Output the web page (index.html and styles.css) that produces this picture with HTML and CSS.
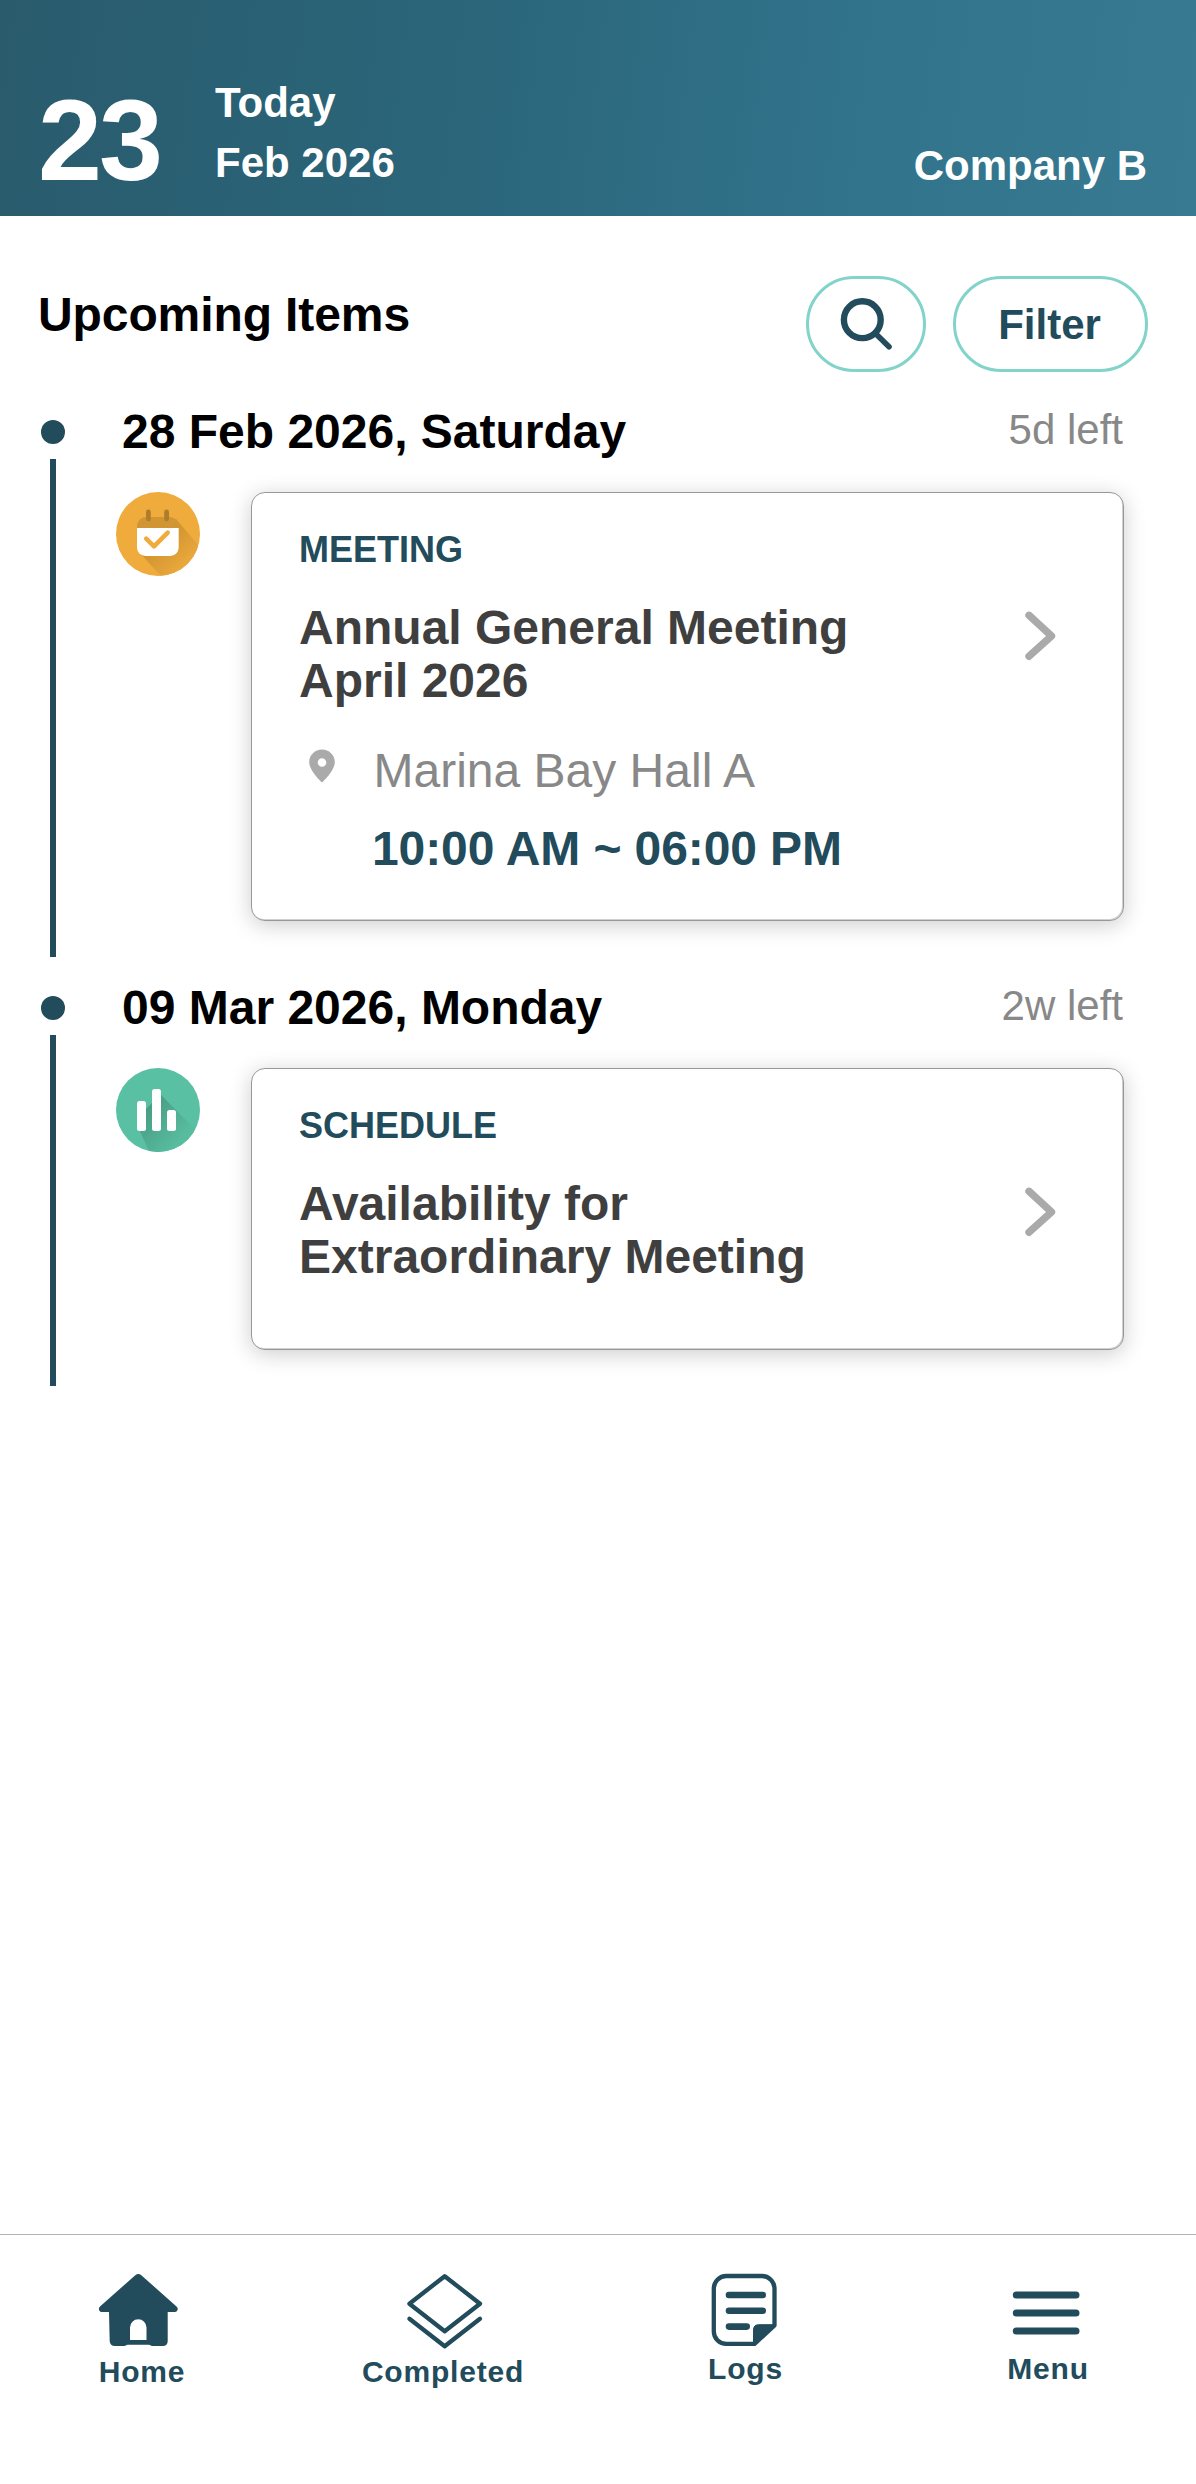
FILE: index.html
```html
<!DOCTYPE html>
<html lang="en">
<head>
<meta charset="utf-8">
<title>Upcoming Items</title>
<link rel="stylesheet" href="styles.css">
</head>
<body>
<div class="app">
  <header class="header">
    <div class="header-day">23</div>
    <div class="header-date"><div>Today</div><div>Feb 2026</div></div>
    <div class="header-company">Company B</div>
  </header>

  <main class="main">
    <div class="toolbar">
      <h1 class="toolbar-title">Upcoming Items</h1>
      <button class="pill pill-search" aria-label="Search">
        <svg width="60" height="60" viewBox="0 0 60 60" fill="none" stroke="currentColor" stroke-linecap="round">
          <circle cx="26.3" cy="25.7" r="18.4" stroke-width="6.4"/>
          <path d="M40 40L53 52.7" stroke-width="5.6"/>
        </svg>
      </button>
      <button class="pill pill-filter">Filter</button>
    </div>

    <section class="item">
      <span class="dot"></span>
      <div class="item-head">
        <h2 class="item-date">28 Feb 2026, Saturday</h2>
        <span class="item-left">5d left</span>
      </div>
      <span class="line"></span>
      <div class="item-body">
        <svg class="badge" viewBox="0 0 84 84">
          <defs>
            <linearGradient id="meeting-shade" x1="30" y1="35" x2="68" y2="76" gradientUnits="userSpaceOnUse">
              <stop offset="0.3" stop-color="#cf9230"/><stop offset="1" stop-color="#eba93c"/>
            </linearGradient>
            <clipPath id="disc"><circle cx="42" cy="42" r="42"/></clipPath>
          </defs>
          <circle cx="42" cy="42" r="42" fill="#f0ab3d"/>
          <path d="M60 27L90 62V90H50L24 61Z" fill="url(#meeting-shade)" clip-path="url(#disc)"/>
          <path d="M21 36V34a9 9 0 0 1 9-9H53.700a9 9 0 0 1 9 9V36Z" fill="#d19633"/>
          <path d="M21 36H62.700V55.500a8.500 8.500 0 0 1-8.500 8.500H29.500A8.500 8.500 0 0 1 21 55.500Z" fill="#fff"/>
          <path d="M32.400 20V27M50.600 20V27" stroke="#ae7d2b" stroke-width="4.800" stroke-linecap="round"/>
          <path d="M30.200 46.700L38 54.300L51.700 40.700" fill="none" stroke="#f0ab3d" stroke-width="4.600" stroke-linecap="round" stroke-linejoin="round"/>
        </svg>
        <article class="card card-meeting">
          <div class="card-text">
            <div class="card-kind">MEETING</div>
            <h3 class="card-title">Annual General Meeting April 2026</h3>
            <div class="card-place">
              <svg class="pin" width="26" height="34" viewBox="0 0 26 34"><path d="M13 0.500C6 0.500 0.200 6 0.200 13C0.200 22 13 33.500 13 33.500S25.800 22 25.800 13C25.800 6 20 0.500 13 0.500ZM13 9.200a4.300 4.300 0 1 1 0 8.600a4.300 4.300 0 0 1 0-8.600Z" fill="#aaa"/></svg>
              <span>Marina Bay Hall A</span>
            </div>
            <div class="card-time">10:00 AM ~ 06:00 PM</div>
          </div>
          <svg class="chevron" width="40" height="56" viewBox="0 0 40 56"><path d="M8 7.300L30.500 28L8 48.300"/></svg>
        </article>
      </div>
    </section>

    <section class="item">
      <span class="dot"></span>
      <div class="item-head">
        <h2 class="item-date">09 Mar 2026, Monday</h2>
        <span class="item-left">2w left</span>
      </div>
      <span class="line"></span>
      <div class="item-body">
        <svg class="badge" viewBox="0 0 84 84">
          <defs>
            <linearGradient id="schedule-shade" x1="30" y1="40" x2="66" y2="72" gradientUnits="userSpaceOnUse">
              <stop offset="0" stop-color="#499c84"/><stop offset="1" stop-color="#58bd9f"/>
            </linearGradient>
          </defs>
          <circle cx="42" cy="42" r="42" fill="#59c0a3"/>
          <path d="M45 27L90 72V90H36L23.500 62L30 41L36 35Z" fill="url(#schedule-shade)" clip-path="url(#disc)"/>
          <g fill="#fff">
            <rect x="21" y="33" width="9" height="30" rx="2.500"/>
            <rect x="36" y="21" width="9" height="42" rx="2.500"/>
            <rect x="51" y="42" width="9" height="21" rx="2.500"/>
          </g>
        </svg>
        <article class="card card-schedule">
          <div class="card-text">
            <div class="card-kind">SCHEDULE</div>
            <h3 class="card-title">Availability for Extraordinary Meeting</h3>
          </div>
          <svg class="chevron" width="40" height="56" viewBox="0 0 40 56"><path d="M8 7.300L30.500 28L8 48.300"/></svg>
        </article>
      </div>
    </section>
  </main>

  <nav class="nav">
    <a class="nav-item nav-home">
      <svg width="80" height="80" viewBox="0 0 80 80">
        <path fill="currentColor" fill-rule="evenodd" d="M37.300 3.200Q40.300 0.800 43.300 3.200L78.500 34.500Q80.500 36.500 79.300 38.500Q78.500 40 76.500 40H69.700V69Q69.700 74 64.700 74H54L51 72.800H29.500L26.500 74H17Q12 74 11.700 69L11 40H4Q2 40 1.300 38.500Q0.200 36.500 2 34.500ZM32 68H48.500V55.500a8.250 8.250 0 0 0-16.500 0Z"/>
      </svg>
      <span class="nav-label">Home</span>
    </a>
    <a class="nav-item nav-completed">
      <svg width="82" height="80" viewBox="0 0 82 80" fill="none" stroke="currentColor" stroke-width="4.300" stroke-linecap="round" stroke-linejoin="round">
        <path d="M40.700 4.200L76 31.700L40.700 59.200L5.400 31.700Z"/>
        <path d="M5.400 46.800L40.700 74.300L76 46.800"/>
      </svg>
      <span class="nav-label">Completed</span>
    </a>
    <a class="nav-item nav-logs">
      <svg width="72" height="80" viewBox="0 0 72 80" fill="none" stroke="currentColor" stroke-linecap="round">
        <path d="M66.500 53.500V16.500a12.500 12.500 0 0 0-12.500-12.500H18.300A12.500 12.500 0 0 0 5.800 16.500V59.400A12.500 12.500 0 0 0 18.300 71.900H46.500Z" stroke-width="4.300" stroke-linejoin="round"/>
        <path d="M45.500 72V58Q45.500 52.700 50.800 52.700H67Z" fill="currentColor"/>
        <path d="M21 23H54.700M21 38.700H54.700M21 54.600H38.700" stroke-width="6.600"/>
      </svg>
      <span class="nav-label">Logs</span>
    </a>
    <a class="nav-item nav-menu">
      <svg width="72" height="80" viewBox="0 0 72 80" fill="none" stroke="currentColor" stroke-width="7" stroke-linecap="round">
        <path d="M6.300 23H66M6.300 41H66M6.300 59H66"/>
      </svg>
      <span class="nav-label">Menu</span>
    </a>
  </nav>
</div>
</body>
</html>
```
FILE: styles.css
```css
* {
  box-sizing: border-box;
}

body {
  margin: 0;
  background: #fff;
  font-family: "Liberation Sans", Arial, sans-serif;
  color: #224b5b;
}

h1, h2, h3 {
  margin: 0;
}

svg {
  display: block;
  flex: none;
}

.app {
  display: flex;
  flex-direction: column;
  height: 2484px;
}

/* Header */
.header {
  display: flex;
  align-items: flex-end;
  height: 216px;
  padding: 0 48px 20px 38px;
  background: linear-gradient(97deg, #295b6c 0%, #2b667b 40%, #31738b 70%, #377a91 100%);
  color: #fff;
  font-weight: 700;
}

.header-day {
  width: 125px;
  font-size: 115px;
  line-height: 112px;
  letter-spacing: -3px;
}

.header-date {
  margin: 0 0 3px 52px;
  font-size: 42px;
  line-height: 60px;
}

.header-company {
  margin: 0 1px 6px auto;
  font-size: 42px;
  line-height: 48px;
}

.main {
  flex: 1;
}

/* Toolbar */
.toolbar {
  display: flex;
  align-items: flex-start;
  padding: 60px 48px 32px 38px;
}

.toolbar-title {
  flex: 1;
  margin-top: 11px;
  font-size: 48px;
  line-height: 56px;
  letter-spacing: -0.1px;
  color: #000;
}

.pill {
  display: flex;
  align-items: center;
  justify-content: center;
  height: 96px;
  padding: 0;
  border: 3px solid #82d3c9;
  border-radius: 48px;
  background: #fff;
  color: #224b5b;
  font: 700 42px/48px "Liberation Sans", Arial, sans-serif;
}

.pill-search {
  width: 120px;
  margin-right: 27px;
}

.pill-filter {
  width: 195px;
  padding: 2px 2px 0 0;
}

/* Timeline */
.item {
  display: grid;
  grid-template-columns: 24px 1fr;
  grid-template-rows: 55px auto;
  padding: 0 72px 23px 41px;
}

.dot {
  width: 24px;
  height: 24px;
  margin-top: 16px;
  border-radius: 50%;
  background: #224b5b;
}

.line {
  width: 6px;
  justify-self: center;
  background: #224b5b;
}

.item-head {
  display: flex;
  justify-content: space-between;
  padding-left: 57px;
}

.item-date {
  font-size: 48px;
  line-height: 56px;
  color: #000;
}

.item-left {
  margin-right: 1px;
  font-size: 42px;
  line-height: 52px;
  color: #888;
}

.item-body {
  display: flex;
  align-items: flex-start;
  gap: 51px;
  padding: 33px 0 36px 51px;
}

.badge {
  width: 84px;
  height: 84px;
}

.card {
  display: flex;
  flex: 1;
  align-items: flex-start;
  justify-content: space-between;
  padding: 37px 62px 0 47px;
  border: 1px solid #989898;
  border-radius: 14px;
  background: #fff;
  box-shadow: inset -1px -1px 0 #d0d0d0, 0 4px 22px rgba(0, 0, 0, 0.2);
}

.card-meeting {
  height: 429px;
}

.card-schedule {
  height: 282px;
}

.card-kind {
  font-size: 36px;
  font-weight: 700;
  line-height: 40px;
}

.card-title {
  max-width: 600px;
  margin: 31px 0 36px;
  font-size: 48px;
  line-height: 53px;
  color: #3f3f3f;
}

.card-place {
  display: flex;
  align-items: flex-start;
  gap: 39px;
  padding-left: 9.5px;
  font-size: 48px;
  line-height: 56px;
  color: #888;
}

.pin {
  margin-top: 6px;
}

.card-time {
  margin: 22px 0 0 73px;
  font-size: 48px;
  font-weight: 700;
  line-height: 56px;
  letter-spacing: -0.1px;
}

.chevron {
  margin-top: 78px;
  fill: none;
  stroke: #aaa;
  stroke-width: 7.4px;
  stroke-linecap: round;
  stroke-linejoin: round;
}

/* Bottom navigation */
.nav {
  display: flex;
  gap: 122px;
  height: 250px;
  padding: 37px 0 0 52px;
  border-top: 1px solid #b3b3b3;
}

.nav-item {
  display: flex;
  flex-direction: column;
  align-items: center;
  width: 180px;
}

.nav-label {
  margin-top: 3px;
  font-size: 30px;
  font-weight: 700;
  line-height: 34px;
  letter-spacing: 0.8px;
}

.nav-home svg {
  margin-right: 8px;
}

.nav-completed svg {
  margin-left: 2px;
}

.nav-completed .nav-label {
  margin-right: 2px;
}

.nav-logs svg {
  margin-right: 4px;
}

.nav-logs .nav-label {
  margin-right: 1px;
}

.nav-menu svg {
  margin-right: 4px;
}

.nav-logs .nav-label,
.nav-menu .nav-label {
  margin-top: 0;
}
```
